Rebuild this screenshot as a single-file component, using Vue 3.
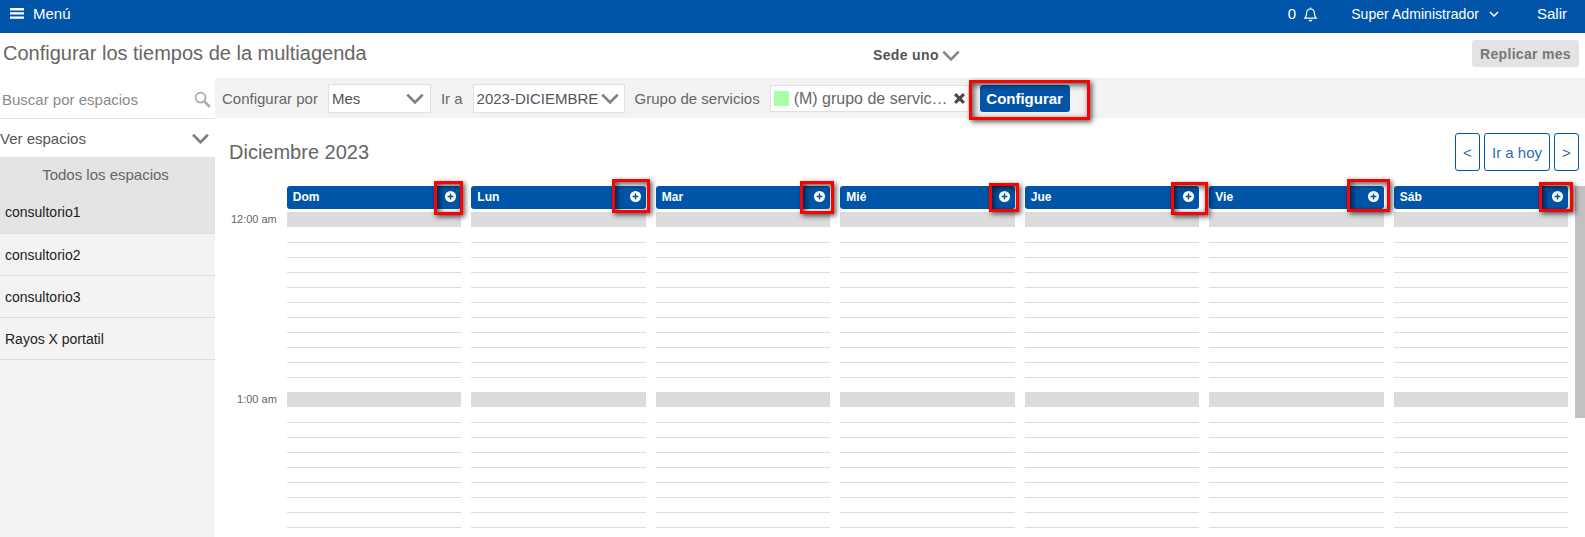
<script setup>
const spaces = ["consultorio1", "consultorio2", "consultorio3", "Rayos X portatil"];
const days = ["Dom", "Lun", "Mar", "Mié", "Jue", "Vie", "Sáb"];
const hours = ["12:00 am", "1:00 am"];
const slots = Array.from({ length: 12 }, (_, i) => i);

// red marks drawn over the capture: x, y, w, h
const marks = [
  [969, 80, 121, 40],
  [434, 181, 29, 34],
  [612, 179, 38, 34],
  [800, 181, 34, 33],
  [989, 183, 30, 29],
  [1171, 182, 37, 33],
  [1347, 179, 43, 33],
  [1539, 182, 34, 30],
];

function markStyle(m) {
  return { left: m[0] + "px", top: m[1] + "px", width: m[2] + "px", height: m[3] + "px" };
}
</script>

<template>
  <div class="page">
    <header class="topbar">
      <div class="menu">
        <svg class="burger" viewBox="0 0 14 11" width="14" height="11">
          <path d="M0 0h14v2.4H0zM0 4.2h14v2.4H0zM0 8.4h14v2.4H0z" fill="#fff" />
        </svg>
        <span>Menú</span>
      </div>
      <div class="top-right">
        <span class="count">0</span>
        <svg class="bell" viewBox="0 0 16 16" width="15" height="16" fill="none" stroke="#fff" stroke-width="1.3">
          <path d="M2 12.5c1.3-1.4 1.8-2.6 1.8-5C3.8 4.8 5.6 2.5 8 2.5s4.2 2.3 4.2 5c0 2.4.5 3.6 1.8 5z" />
          <path d="M6.5 14.300c.4.7.9 1 1.500 1s1.100-.3 1.500-1M8 1v1.500" />
        </svg>
        <span class="user">Super Administrador</span>
        <svg class="user-caret" viewBox="0 0 10 6" width="10" height="6" fill="none" stroke="#fff" stroke-width="1.500">
          <path d="M1 1l4 4 4-4" />
        </svg>
        <span class="exit">Salir</span>
      </div>
    </header>

    <div class="title-row">
      <h1>Configurar los tiempos de la multiagenda</h1>
      <div class="sede">
        <span>Sede uno</span>
        <svg viewBox="0 0 16 10" width="18" height="11" fill="none" stroke="#888" stroke-width="2.400">
          <path d="M1 1.500l7 7 7-7" />
        </svg>
      </div>
      <button class="replicate">Replicar mes</button>
    </div>

    <div class="body">
      <aside class="sidebar">
        <div class="search">
          <span>Buscar por espacios</span>
          <svg viewBox="0 0 16 16" width="17" height="17" fill="none" stroke="#aaa">
            <circle cx="6.200" cy="6.200" r="4.700" stroke-width="1.500" />
            <path d="M9.800 9.800l5 5" stroke-width="2.400" />
          </svg>
        </div>
        <div class="see">
          <span>Ver espacios</span>
          <svg viewBox="0 0 16 10" width="17" height="11" fill="none" stroke="#808080" stroke-width="2.500">
            <path d="M1 1.500l7 7 7-7" />
          </svg>
        </div>
        <div class="all">Todos los espacios</div>
        <div v-for="(s, i) in spaces" :key="s" class="space" :class="{ active: i === 0 }">{{ s }}</div>
      </aside>

      <main class="content">
        <div class="toolbar">
          <span class="lbl first">Configurar por</span>
          <div class="select mes">
            <span>Mes</span>
            <svg viewBox="0 0 16 10" width="18" height="11" fill="none" stroke="#808080" stroke-width="2.500">
              <path d="M1 1.500l7 7 7-7" />
            </svg>
          </div>
          <span class="lbl ira">Ir a</span>
          <div class="select month">
            <span>2023-DICIEMBRE</span>
            <svg viewBox="0 0 16 10" width="18" height="11" fill="none" stroke="#808080" stroke-width="2.500">
              <path d="M1 1.500l7 7 7-7" />
            </svg>
          </div>
          <span class="lbl group">Grupo de servicios</span>
          <div class="chip">
            <i class="swatch"></i>
            <span class="chip-text">(M) grupo de servic…</span>
            <svg viewBox="0 0 10 10" width="11" height="11" stroke="#4a4a4a" stroke-width="2.800">
              <path d="M1 1l8 8M9 1l-8 8" />
            </svg>
          </div>
          <button class="configure">Configurar</button>
        </div>

        <div class="month-head">
          <h2>Diciembre 2023</h2>
          <div class="nav">
            <button class="arrow">&lt;</button>
            <button class="today">Ir a hoy</button>
            <button class="arrow">&gt;</button>
          </div>
        </div>

        <div class="calendar">
          <div class="times">
            <div v-for="h in hours" :key="h" class="time">{{ h }}</div>
          </div>
          <div class="days">
            <div v-for="d in days" :key="d" class="day">
              <div class="day-head">
                <span>{{ d }}</span>
                <svg viewBox="0 0 12 12" width="11" height="11">
                  <circle cx="6" cy="6" r="6" fill="#fff" />
                  <path d="M6 2.800v6.400M2.800 6h6.400" stroke="#00509f" stroke-width="1.500" />
                </svg>
              </div>
              <div v-for="h in hours" :key="h" class="hour">
                <div v-for="n in slots" :key="n" class="slot"></div>
              </div>
            </div>
          </div>
          <div class="scroll-thumb"></div>
        </div>
      </main>
    </div>

    <div v-for="m in marks" :key="m[0]" class="mark" :style="markStyle(m)"></div>
  </div>
</template>

<style>
html,
body {
  margin: 0;
  overflow: hidden;
}
</style>

<style scoped>
.page {
  position: relative;
  width: 1585px;
  height: 537px;
  overflow: hidden;
  background: #fff;
  font-family: "Liberation Sans", Arial, sans-serif;
  color: #555;
}

.topbar {
  height: 33px;
  background: #0055a9;
  color: #fff;
  display: flex;
  align-items: center;
  justify-content: space-between;
  font-size: 14px;
}

.menu {
  display: flex;
  align-items: center;
  gap: 9px;
  padding-left: 10px;
  padding-bottom: 6px;
  font-size: 15px;
}

.top-right {
  display: flex;
  align-items: center;
  padding-bottom: 6px;
}

.count {
  font-size: 15px;
}

.bell {
  margin-left: 7px;
}

.user {
  margin-left: 33px;
  letter-spacing: 0.05px;
}

.user-caret {
  margin-left: 10px;
}

.exit {
  margin-left: 38px;
  margin-right: 18px;
  font-size: 15px;
}

.title-row {
  height: 45px;
  display: flex;
  align-items: center;
  position: relative;
}

h1 {
  margin: 0 0 4px 3px;
  font-size: 20px;
  font-weight: 400;
  color: #666;
}

.sede {
  position: absolute;
  left: 873px;
  top: 14px;
  display: flex;
  align-items: center;
  gap: 3px;
  font-size: 14px;
  font-weight: 700;
  letter-spacing: 0.35px;
  color: #555;
}

.replicate {
  margin-left: auto;
  margin-right: 6px;
  margin-bottom: 4px;
  width: 107px;
  height: 27px;
  border: 0;
  border-radius: 3px;
  padding: 0;
  background: #e3e3e3;
  color: #777;
  font: 700 14px "Liberation Sans", Arial, sans-serif;
  letter-spacing: 0.3px;
}

.body {
  display: flex;
  height: 459px;
}

.sidebar {
  width: 215px;
  flex: none;
  background: #f3f3f3;
  font-size: 14px;
}

.search {
  height: 41px;
  box-sizing: border-box;
  display: flex;
  align-items: center;
  justify-content: space-between;
  padding: 2px 4px 0 2px;
  background: #fff;
  color: #8a8a8a;
  font-size: 15px;
  border-bottom: 1px solid #e3e3e3;
}

.see {
  height: 39px;
  box-sizing: border-box;
  display: flex;
  align-items: center;
  justify-content: space-between;
  padding: 0 6px 0 0;
  background: #fff;
  border-bottom: 1px solid #e3e3e3;
  font-size: 15px;
  color: #555;
}

.all {
  height: 33px;
  box-sizing: border-box;
  padding-right: 4px;
  background: #e4e4e4;
  display: flex;
  align-items: center;
  justify-content: center;
  font-size: 15px;
  color: #666;
}

.space {
  height: 42px;
  box-sizing: border-box;
  display: flex;
  align-items: center;
  padding-left: 5px;
  border-bottom: 1px solid #dcdcdc;
  color: #222;
}

.space.active {
  height: 43px;
  background: #e4e4e4;
}

.content {
  flex: 1;
  min-width: 0;
}

.toolbar {
  height: 40px;
  box-sizing: border-box;
  padding-top: 1px;
  background: #f3f3f3;
  display: flex;
  align-items: center;
  font-size: 15px;
  color: #666;
}

.lbl.first {
  margin-left: 7px;
}

.select {
  height: 29px;
  box-sizing: border-box;
  background: #fff;
  border: 1px solid #e0e0e0;
  display: flex;
  align-items: center;
  justify-content: space-between;
  color: #555;
}

.mes {
  width: 103px;
  margin-left: 10px;
  padding: 0 6px 0 3px;
}

.ira {
  margin-left: 10px;
}

.month {
  width: 152px;
  margin-left: 10px;
  padding: 0 5px 0 3px;
}

.group {
  margin-left: 10px;
}

.chip {
  width: 199px;
  height: 27px;
  margin-left: 10px;
  box-sizing: border-box;
  background: #fff;
  border: 1px solid #e0e0e0;
  display: flex;
  align-items: center;
  padding-left: 3px;
  color: #666;
}

.swatch {
  width: 15px;
  height: 15px;
  background: #aaffaa;
}

.chip-text {
  margin-left: 5px;
  font-size: 16px;
  width: 160px;
  white-space: nowrap;
}

.configure {
  margin-left: 11px;
  width: 90px;
  height: 27px;
  border: 0;
  border-radius: 3px;
  padding: 0;
  background: #0055a9;
  color: #fff;
  font: 700 15px "Liberation Sans", Arial, sans-serif;
}

.month-head {
  height: 68px;
  display: flex;
  align-items: flex-start;
  justify-content: space-between;
}

h2 {
  margin: 23px 0 0 14px;
  font-size: 20px;
  font-weight: 400;
  color: #666;
}

.nav {
  display: flex;
  gap: 4px;
  margin: 15px 6px 0 0;
}

.nav button {
  height: 38px;
  padding: 0;
  box-sizing: border-box;
  background: #fff;
  border: 1px solid #0055a9;
  border-radius: 3px;
  color: #2a6cb0;
  font: 15px "Liberation Sans", Arial, sans-serif;
}

.arrow {
  width: 25px;
}

.today {
  width: 66px;
}

.calendar {
  display: flex;
  position: relative;
  height: 351px;
  overflow: hidden;
}

.times {
  width: 71.8px;
  flex: none;
  padding-top: 27px;
}

.time {
  height: 180px;
  box-sizing: border-box;
  padding-right: 10px;
  text-align: right;
  font-size: 11px;
  color: #666;
}

.days {
  width: 1281.5px;
  display: grid;
  grid-template-columns: repeat(7, 174.5px);
  column-gap: 10px;
}

.day-head {
  height: 23px;
  margin-bottom: 3px;
  border-radius: 3px;
  background: #0055a9;
  color: #fff;
  font-size: 12px;
  font-weight: 700;
  display: flex;
  align-items: center;
  justify-content: space-between;
  padding: 0 5px 2px 6px;
  box-sizing: border-box;
}

.slot {
  height: 15px;
  box-sizing: border-box;
}

.slot:first-child {
  background: #dcdcdc;
}

.slot:nth-child(n + 3) {
  border-top: 1px solid #dcdcdc;
}

.scroll-thumb {
  position: absolute;
  right: 0;
  top: 0;
  width: 10px;
  height: 232px;
  background: #c1c1c1;
}

.mark {
  position: absolute;
  box-sizing: border-box;
  border: 3px solid #f00;
  box-shadow: 2px 2px 5px rgba(0, 0, 0, 0.65), inset 2px 2px 6px rgba(0, 0, 0, 0.7);
}
</style>
